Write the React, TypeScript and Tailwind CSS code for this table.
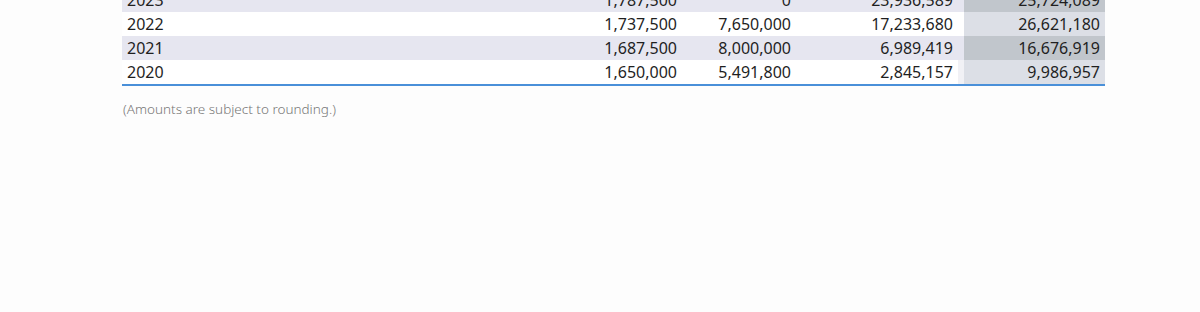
const rows = [
  { year: "2023", a: "1,787,500", b: "0", c: "23,936,589", total: "25,724,089" },
  { year: "2022", a: "1,737,500", b: "7,650,000", c: "17,233,680", total: "26,621,180" },
  { year: "2021", a: "1,687,500", b: "8,000,000", c: "6,989,419", total: "16,676,919" },
  { year: "2020", a: "1,650,000", b: "5,491,800", c: "2,845,157", total: "9,986,957" },
];

export default function App() {
  return (
    <div className="w-[1200px] h-[312px] overflow-hidden bg-[#fdfdfd] font-['Noto_Sans',sans-serif] text-[#1f1f1f]">
      <div className="ml-[122px] w-[983px] -mt-[12px]">
        <div className="border-b-2 border-[#4a90d9]">
          {rows.map((r, i) => {
            const striped = i % 2 === 0;
            const last = i === rows.length - 1;
            return (
              <div
                key={r.year}
                className={`grid grid-cols-[458px_102px_114px_162px_6px_141px] h-[24px] items-center text-[16px] leading-[24px] ${
                  striped ? "bg-[#e6e6f0]" : "bg-white"
                }`}
              >
                <div className="pl-[5px]">{r.year}</div>
                <div className="text-right pr-[5px]">{r.a}</div>
                <div className="text-right pr-[5px]">{r.b}</div>
                <div className="text-right pr-[5px]">{r.c}</div>
                <div className={`h-full ${last ? "bg-[#f1f1f5]" : ""}`} />
                <div
                  className={`h-full text-right pr-[5px] ${
                    striped ? "bg-[#c1c6cc]" : "bg-[#dcdfe6]"
                  }`}
                >
                  {r.total}
                </div>
              </div>
            );
          })}
        </div>
        <p className="mt-[13px] text-[13.5px] leading-[20px] font-light text-[#777777] pl-[1px]">
          (Amounts are subject to rounding.)
        </p>
      </div>
    </div>
  );
}
